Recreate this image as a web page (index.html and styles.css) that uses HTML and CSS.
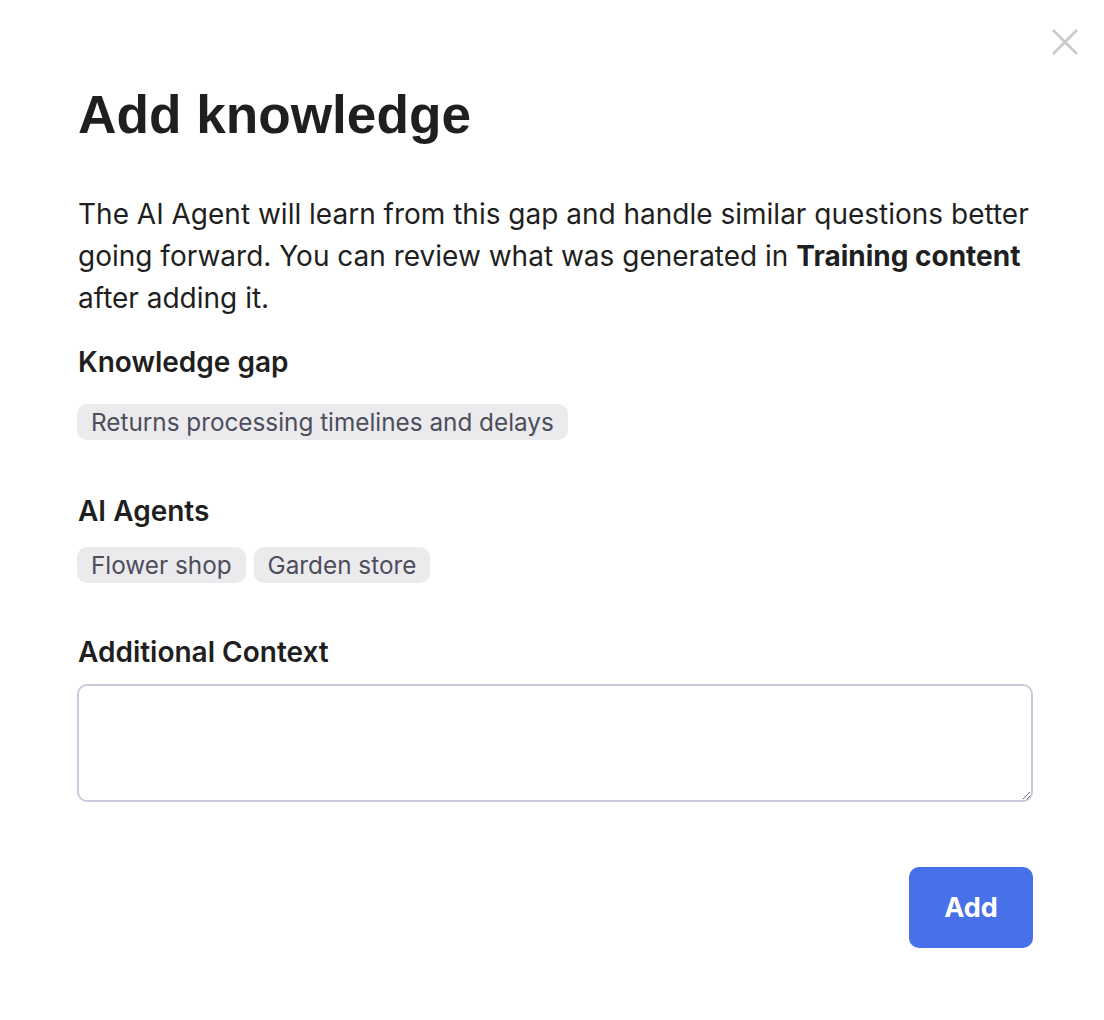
FILE: index.html
```html
<!DOCTYPE html>
<html lang="en">
<head>
<meta charset="utf-8">
<title>Add knowledge</title>
<link rel="stylesheet" href="styles.css">
</head>
<body>
<div class="modal">
  <button class="close" aria-label="Close">
    <svg width="28" height="28" viewBox="0 0 28 28"><path d="M2 2L26 26M26 2L2 26" stroke="#c9c9cc" stroke-width="2.6" stroke-linecap="butt"/></svg>
  </button>
  <h1 class="title">Add knowledge</h1>
  <p class="intro">The AI Agent will learn from this gap and handle similar questions better going forward. You can review what was generated in <strong>Training content</strong> after adding it.</p>
  <section class="field field-gap">
    <h2 class="label">Knowledge gap</h2>
    <div class="chips"><span class="chip">Returns processing timelines and delays</span></div>
  </section>
  <section class="field field-agents">
    <h2 class="label">AI Agents</h2>
    <div class="chips"><span class="chip">Flower shop</span><span class="chip">Garden store</span></div>
  </section>
  <section class="field field-context">
    <h2 class="label">Additional Context</h2>
    <textarea class="context"></textarea>
  </section>
  <div class="actions"><button class="add">Add</button></div>
</div>
</body>
</html>
```
FILE: styles.css
```css
* { box-sizing: border-box; }
html, body { margin: 0; background: #fff; }
body { font-family: Inter, "Noto Sans", sans-serif; color: #1f1f21; }
.modal { position: relative; padding: 83px 71px 0 77px; display: flex; flex-direction: column; }
.close { position: absolute; top: 28px; right: 25px; border: 0; background: none; padding: 0; width: 28px; height: 28px; cursor: pointer; }
.close svg { display: block; }
.title { margin: 0 0 0 1px; font-family: "Liberation Sans", Arial, sans-serif; font-weight: 700; font-size: 53.2px; line-height: 64px; color: #1f1f21; letter-spacing: 0; }
.intro { margin: 46px 0 0 1px; font-size: 28px; line-height: 42px; color: #1f1f21; }
.intro strong { font-weight: 700; }
.label { margin: 0 0 0 1px; font-size: 28px; font-weight: 600; line-height: 32px; color: #1f1f21; }
.field-gap { margin-top: 27px; }
.field-agents { margin-top: 55px; }
.field-context { margin-top: 53px; }
.chips { display: flex; gap: 8px; margin-top: 26px; }
.field-agents .chips { margin-top: 20px; }
.chip { display: inline-block; height: 36px; line-height: 36px; padding: 0 14px; background: #ebebee; color: #4d4d5c; border-radius: 10px; font-size: 24.3px; }
.context { display: block; margin-top: 16px; width: 100%; height: 118px; border: 2px solid #c9c9dc; border-radius: 10px; resize: vertical; font-family: inherit; font-size: 20px; padding: 10px 14px; }
.actions { display: flex; justify-content: flex-end; margin-top: 65px; }
.add { width: 124px; height: 81px; background: #4870e8; color: #fff; border: 0; border-radius: 10px; font-family: Inter, sans-serif; font-weight: 700; font-size: 27px; cursor: pointer; }
```
